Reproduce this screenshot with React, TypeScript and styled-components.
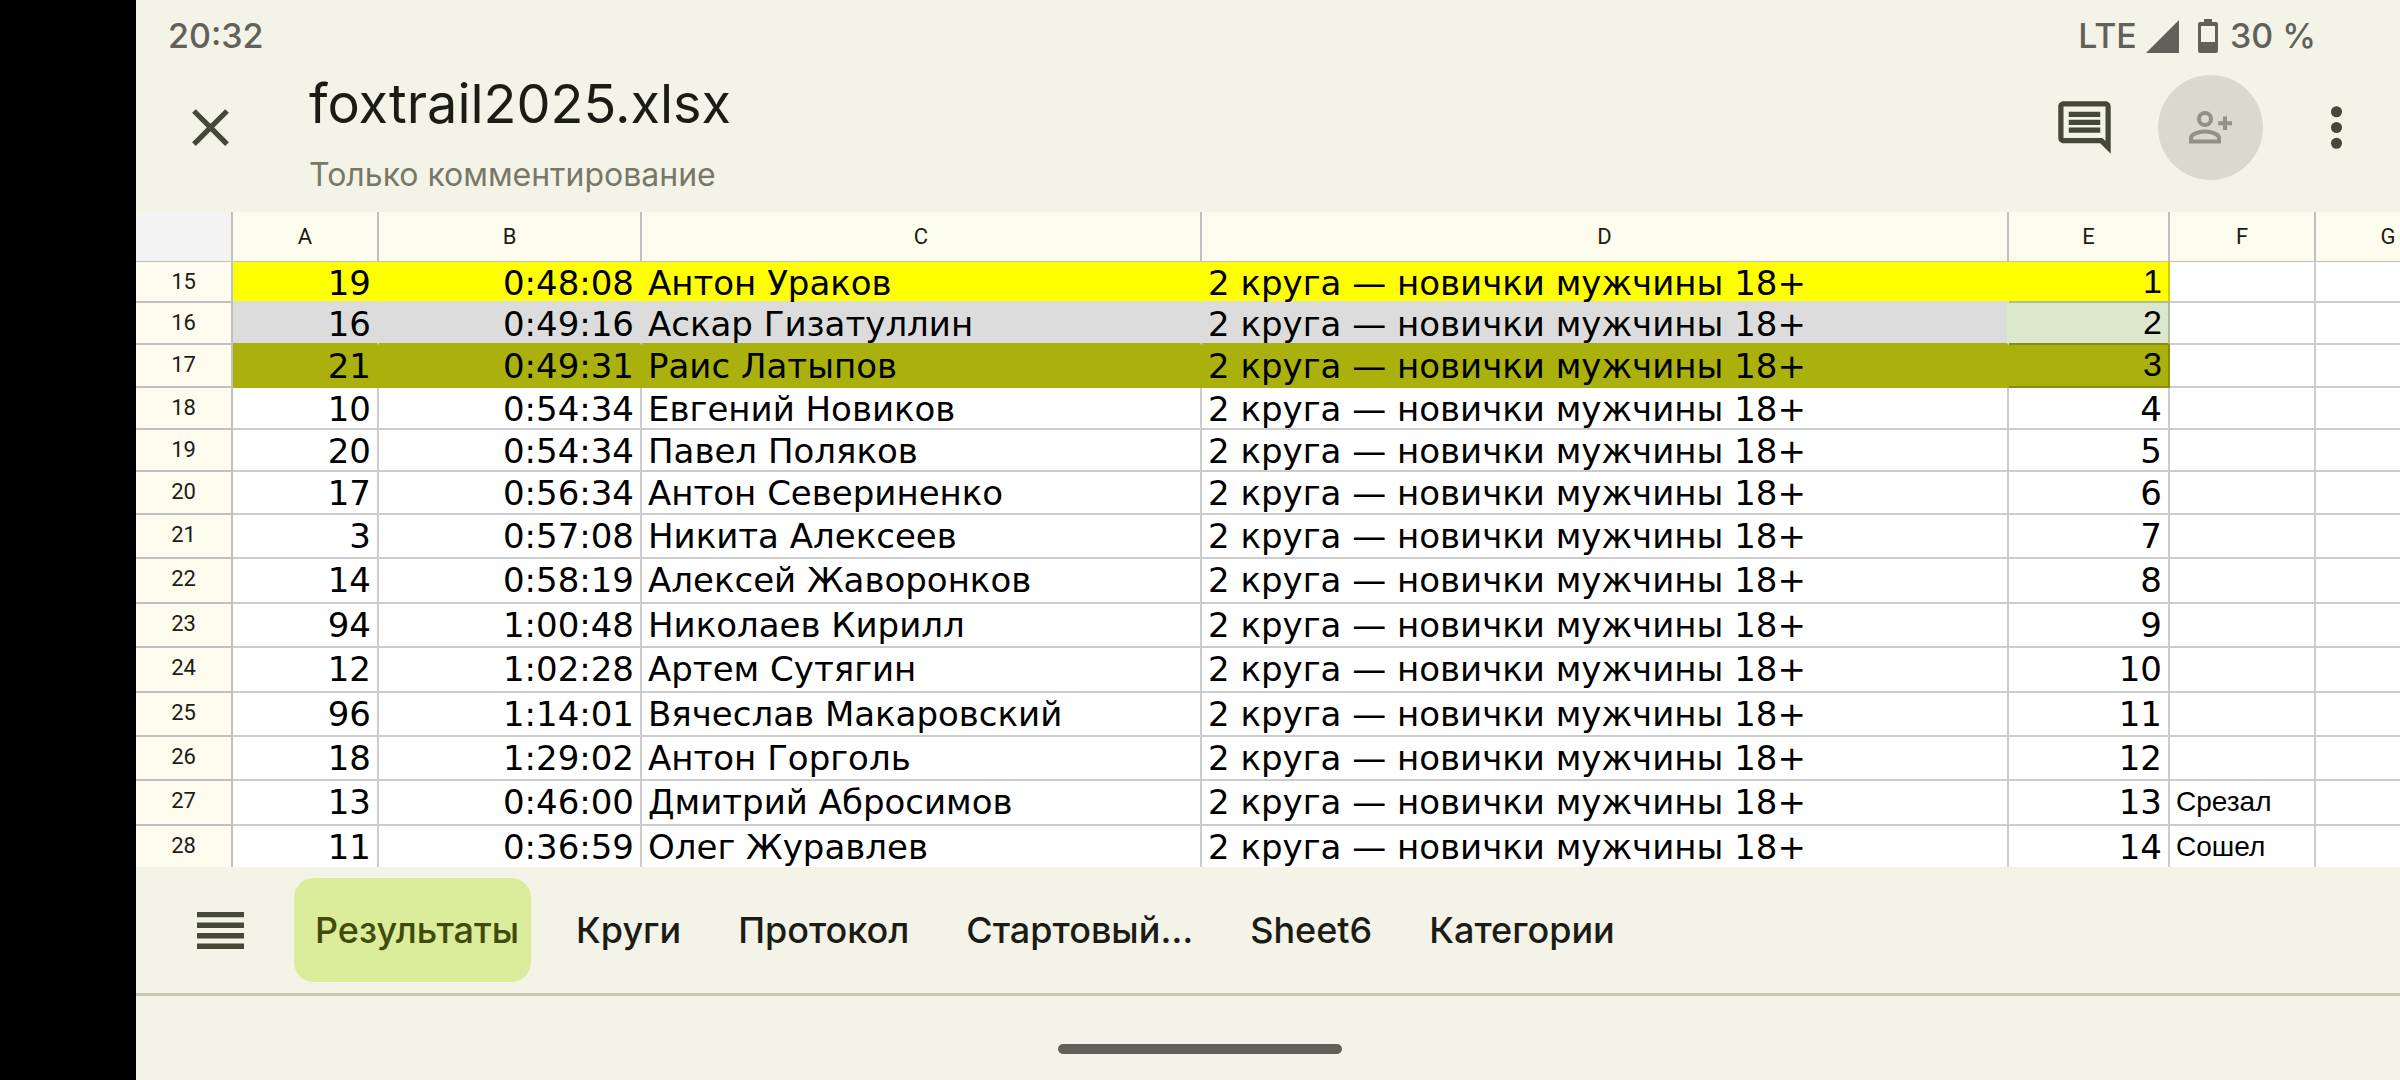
import React, { useState } from 'react';
import styled, { createGlobalStyle } from 'styled-components';

const color = {
  surface: '#f4f3e7',
  headerCell: '#fdfbed',
  corner: '#f3f3f3',
  grid: '#cccccc',
  headerGrid: '#c0c0c0',
  ink: '#1c1c16',
  icon: '#464838',
  muted: '#78786a',
  status: '#61615a',
  accent: '#dbec9a',
  accentInk: '#414b0b',
  divider: '#c8c7b5',
};

const uiFont = `Inter, Roboto, 'Noto Sans', sans-serif`;
const dataFont = `'DejaVu Sans', Verdana, sans-serif`;
const plainFont = `'Liberation Sans', Arial, sans-serif`;
const headingFont = `Roboto, 'Noto Sans', sans-serif`;

const GlobalStyle = createGlobalStyle`
  *, *::before, *::after { box-sizing: border-box; }
  body { margin: 0; background: #000; }
  button { appearance: none; border: 0; margin: 0; padding: 0; background: none; font: inherit; color: inherit; cursor: pointer; }
  svg { display: block; flex: none; }
`;

const Screen = styled.div`
  display: flex;
  height: 100vh;
  padding-left: 136px;
  background: #000;
  font-family: ${uiFont};
`;

const Main = styled.main`
  display: flex;
  flex: 1;
  flex-direction: column;
  min-width: 0;
  background: ${color.surface};
`;

const StatusBar = styled.div`
  display: flex;
  flex: none;
  align-items: center;
  justify-content: space-between;
  height: 72px;
  padding: 0 84px 0 32px;
  color: ${color.status};
  font-size: 34px;
  font-weight: 500;
  line-height: 48px;
`;

const StatusGroup = styled.div`
  display: flex;
  align-items: center;
`;

const Signal = styled.svg`
  width: 33px;
  height: 33px;
  margin: 0 19px 0 9px;
`;

const Battery = styled.svg`
  width: 20px;
  height: 34px;
  margin-right: 12px;
`;

const Toolbar = styled.header`
  display: flex;
  flex: none;
  align-items: flex-start;
  height: 140px;
  padding: 3px 11px 0 42px;
  color: ${color.icon};
`;

const TitleBlock = styled.div`
  flex: 1;
  min-width: 0;
  margin-left: 67px;
`;

const Title = styled.h1`
  margin: 0;
  color: ${color.ink};
  font-size: 54px;
  font-weight: 400;
  line-height: 58px;
  white-space: nowrap;
`;

const Subtitle = styled.p`
  margin: 18px 0 0;
  color: ${color.muted};
  font-size: 32px;
  line-height: 48px;
`;

const Actions = styled.div`
  display: flex;
  gap: 21px;
`;

const IconButton = styled.button<{ $narrow?: boolean; $filled?: boolean }>`
  display: flex;
  align-items: center;
  justify-content: center;
  width: ${(p) => (p.$narrow ? 64 : 105)}px;
  height: 105px;
  border-radius: 53px;
  background: ${(p) => (p.$filled ? '#d9d9ce' : 'transparent')};
  color: ${(p) => (p.$filled ? '#919187' : color.icon)};
`;

const SheetView = styled.section`
  flex: 1;
  min-height: 0;
  overflow: hidden;
  background: #fff;
`;

/* The last column runs past the right edge of the view. */
const Table = styled.table`
  width: calc(100% + 62px);
  table-layout: fixed;
  border-collapse: separate;
  border-spacing: 0;
  color: #000;
`;

const Col = styled.col<{ $width?: number }>`
  width: ${(p) => (p.$width ? `${p.$width}px` : 'auto')};
`;

const ColumnHead = styled.th<{ $corner?: boolean }>`
  height: 50px;
  padding: 0;
  border-right: 2px solid ${color.headerGrid};
  border-bottom: 1px solid ${color.headerGrid};
  background: ${(p) => (p.$corner ? color.corner : color.headerCell)};
  color: ${color.ink};
  font: 400 22px/32px ${headingFont};
`;

const Row = styled.tr<{ $height: number }>`
  height: ${(p) => p.$height}px;
`;

const RowHead = styled.th`
  padding: 4px 0 0;
  border-right: 2px solid ${color.headerGrid};
  border-bottom: 2px solid ${color.headerGrid};
  background: ${color.headerCell};
  color: ${color.ink};
  font: 400 22px/32px ${headingFont};
  vertical-align: top;
`;

type CellStyle = { $fill?: string; $right?: string; $bottom?: string; $end?: boolean; $face?: 'large' | 'small' };

const Cell = styled.td<CellStyle>`
  padding: 3px 6px 0;
  border-right: 2px solid ${(p) => p.$right ?? color.grid};
  border-bottom: 2px solid ${(p) => p.$bottom ?? color.grid};
  background: ${(p) => p.$fill ?? '#fff'};
  font-family: ${(p) => (p.$face ? plainFont : dataFont)};
  font-size: ${(p) => (p.$face === 'small' ? 28 : 34)}px;
  line-height: ${(p) => (p.$face === 'large' ? 32 : 36)}px;
  text-align: ${(p) => (p.$end ? 'right' : 'left')};
  vertical-align: top;
  white-space: nowrap;
`;

const SheetBar = styled.nav`
  display: flex;
  flex: none;
  align-items: center;
  gap: 25px;
  padding: 11px 36px;
  border-bottom: 3px solid ${color.divider};
`;

const MenuButton = styled.button`
  display: flex;
  align-items: center;
  justify-content: center;
  width: 97px;
  height: 104px;
  color: ${color.icon};
`;

const Tabs = styled.div`
  display: flex;
  gap: 24px;
`;

const Tab = styled.button<{ $active: boolean }>`
  height: 104px;
  padding: 0 12px 0 21px;
  border-radius: 20px;
  background: ${(p) => (p.$active ? color.accent : 'transparent')};
  color: ${(p) => (p.$active ? color.accentInk : color.ink)};
  font-size: 36px;
  font-weight: 500;
  line-height: 48px;
  white-space: nowrap;
`;

const GestureArea = styled.div`
  display: flex;
  flex: none;
  align-items: center;
  justify-content: center;
  height: 84px;
  padding: 22px 136px 0 0;
`;

const GestureHandle = styled.div`
  width: 284px;
  height: 10px;
  border-radius: 5px;
  background: ${color.status};
`;

type Tint = { fill: string; next: string; last: string; lastRight: string; lastBottom: string };

const tints: Record<number, Tint> = {
  15: { fill: '#ffff00', next: '#dcdcdc', last: '#ffff00', lastRight: '#cccc00', lastBottom: '#b1b9a3' },
  16: { fill: '#dcdcdc', next: '#aab10c', last: '#dce8cb', lastRight: '#b1b9a3', lastBottom: '#888e0a' },
  17: { fill: '#aab10c', next: '#aab10c', last: '#aab10c', lastRight: '#888e0a', lastBottom: '#888e0a' },
};

type Entry = { row: number; height: number; bib: number; time: string; name: string; note?: string };

const entries: Entry[] = [
  { row: 15, height: 41, bib: 19, time: '0:48:08', name: 'Антон Ураков' },
  { row: 16, height: 42, bib: 16, time: '0:49:16', name: 'Аскар Гизатуллин' },
  { row: 17, height: 43, bib: 21, time: '0:49:31', name: 'Раис Латыпов' },
  { row: 18, height: 42, bib: 10, time: '0:54:34', name: 'Евгений Новиков' },
  { row: 19, height: 42, bib: 20, time: '0:54:34', name: 'Павел Поляков' },
  { row: 20, height: 43, bib: 17, time: '0:56:34', name: 'Антон Севериненко' },
  { row: 21, height: 44, bib: 3, time: '0:57:08', name: 'Никита Алексеев' },
  { row: 22, height: 45, bib: 14, time: '0:58:19', name: 'Алексей Жаворонков' },
  { row: 23, height: 44, bib: 94, time: '1:00:48', name: 'Николаев Кирилл' },
  { row: 24, height: 45, bib: 12, time: '1:02:28', name: 'Артем Сутягин' },
  { row: 25, height: 44, bib: 96, time: '1:14:01', name: 'Вячеслав Макаровский' },
  { row: 26, height: 44, bib: 18, time: '1:29:02', name: 'Антон Горголь' },
  { row: 27, height: 45, bib: 13, time: '0:46:00', name: 'Дмитрий Абросимов', note: 'Срезал' },
  { row: 28, height: 45, bib: 11, time: '0:36:59', name: 'Олег Журавлев', note: 'Сошел' },
];

const category = '2 круга — новички мужчины 18+';
const columns = ['A', 'B', 'C', 'D', 'E', 'F', 'G'];
const sheets = ['Результаты', 'Круги', 'Протокол', 'Стартовый…', 'Sheet6', 'Категории'];

const CloseIcon = () => (
  <svg width="63" height="63" viewBox="0 0 24 24" fill="currentColor" aria-hidden="true">
    <path d="M19 6.41 17.59 5 12 10.59 6.41 5 5 6.41 10.59 12 5 17.59 6.41 19 12 13.41 17.59 19 19 17.59 13.41 12z" />
  </svg>
);

const CommentIcon = () => (
  <svg width="63" height="63" viewBox="0 0 24 24" fill="currentColor" aria-hidden="true">
    <path d="M21.99 4c0-1.1-.89-2-1.99-2H4c-1.1 0-2 .9-2 2v12c0 1.1.9 2 2 2h14l4 4-.01-18zM20 4v13.17L18.83 16H4V4h16zM6 12h12v2H6zM6 9h12v2H6zM6 6h12v2H6z" />
  </svg>
);

const PersonAddIcon = () => (
  <svg width="43" height="33" viewBox="0 0 43 33" aria-hidden="true">
    <g fill="none" stroke="currentColor" strokeWidth="4">
      <circle cx="16" cy="8" r="6" />
      <path d="M2 30.5V27c0-3.600 7.500-6.500 14-6.500S30 23.400 30 27v3.500z" />
      <path d="M36 5.500v13.500M29.200 12.200H43" />
    </g>
  </svg>
);

const MoreIcon = () => (
  <svg width="63" height="63" viewBox="0 0 24 24" fill="currentColor" aria-hidden="true">
    <circle cx="12" cy="6" r="2.100" />
    <circle cx="12" cy="12" r="2.100" />
    <circle cx="12" cy="18" r="2.100" />
  </svg>
);

const AllSheetsIcon = () => (
  <svg width="47" height="37" viewBox="0 0 47 37" fill="currentColor" aria-hidden="true">
    <path d="M0 0h47v5.300H0zM0 10.600h47v5.300H0zM0 21.100h47v5.300H0zM0 31.600h47V37H0z" />
  </svg>
);

function SheetRow({ entry, place }: { entry: Entry; place: number }) {
  const tint = tints[entry.row];
  const fill = tint?.fill;
  const plain = { $fill: fill, $right: fill, $bottom: tint?.next };
  return (
    <Row $height={entry.height}>
      <RowHead scope="row">{entry.row}</RowHead>
      <Cell {...plain} $end>{entry.bib}</Cell>
      <Cell {...plain} $end>{entry.time}</Cell>
      <Cell {...plain}>{entry.name}</Cell>
      <Cell {...plain} $right={tint?.last}>{category}</Cell>
      <Cell $fill={tint?.last} $right={tint?.lastRight} $bottom={tint?.lastBottom} $end $face={tint && 'large'}>
        {place}
      </Cell>
      <Cell $face="small">{entry.note}</Cell>
      <Cell />
    </Row>
  );
}

export default function App() {
  const [active, setActive] = useState(sheets[0]);
  return (
    <>
      <GlobalStyle />
      <Screen>
        <Main>
          <StatusBar>
            <span>20:32</span>
            <StatusGroup>
              <span>LTE</span>
              <Signal viewBox="0 0 33 33" fill="currentColor" aria-hidden="true">
                <path d="M33 0v33H0z" />
              </Signal>
              <Battery viewBox="0 0 20 34" fill="currentColor" aria-hidden="true">
                <path fillRule="evenodd" d="M6 0h8v3h4a2 2 0 0 1 2 2v27a2 2 0 0 1-2 2H2a2 2 0 0 1-2-2V5a2 2 0 0 1 2-2h4zM3 7v16h14V7z" />
              </Battery>
              <span>30 %</span>
            </StatusGroup>
          </StatusBar>
          <Toolbar>
            <IconButton $narrow aria-label="Закрыть"><CloseIcon /></IconButton>
            <TitleBlock>
              <Title>foxtrail2025.xlsx</Title>
              <Subtitle>Только комментирование</Subtitle>
            </TitleBlock>
            <Actions>
              <IconButton aria-label="Комментарии"><CommentIcon /></IconButton>
              <IconButton $filled aria-label="Открыть доступ"><PersonAddIcon /></IconButton>
              <IconButton aria-label="Ещё"><MoreIcon /></IconButton>
            </Actions>
          </Toolbar>
          <SheetView>
            <Table>
              <colgroup>
                <Col $width={97} />
                <Col $width={146} />
                <Col $width={263} />
                <Col $width={560} />
                <Col />
                <Col $width={161} />
                <Col $width={146} />
                <Col $width={146} />
              </colgroup>
              <thead>
                <tr>
                  <ColumnHead $corner />
                  {columns.map((c) => <ColumnHead key={c} scope="col">{c}</ColumnHead>)}
                </tr>
              </thead>
              <tbody>
                {entries.map((entry, i) => <SheetRow key={entry.row} entry={entry} place={i + 1} />)}
              </tbody>
            </Table>
          </SheetView>
          <SheetBar aria-label="Листы">
            <MenuButton aria-label="Все листы"><AllSheetsIcon /></MenuButton>
            <Tabs role="tablist">
              {sheets.map((s) => (
                <Tab key={s} role="tab" aria-selected={s === active} $active={s === active} onClick={() => setActive(s)}>
                  {s}
                </Tab>
              ))}
            </Tabs>
          </SheetBar>
          <GestureArea>
            <GestureHandle />
          </GestureArea>
        </Main>
      </Screen>
    </>
  );
}
